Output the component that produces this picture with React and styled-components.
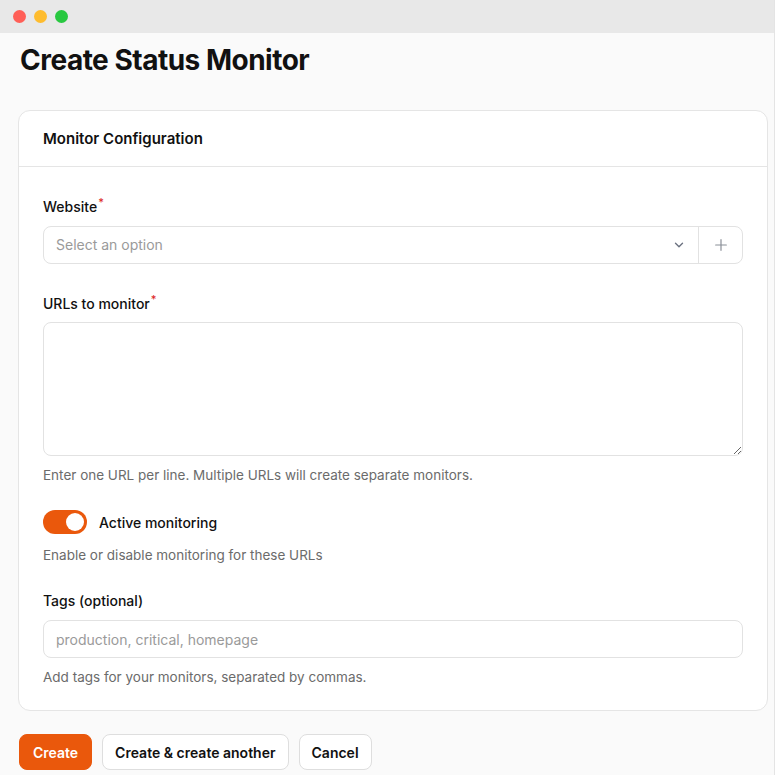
import React from "react";
import styled, { createGlobalStyle } from "styled-components";

const Global = createGlobalStyle`
  html, body { margin: 0; padding: 0; background: #fafafa; }
  body { font-family: Inter, "Noto Sans", sans-serif; color: #111; }
  * { box-sizing: border-box; }
`;

const Window = styled.div`
  width: 775px; height: 775px; display: flex; flex-direction: column;
  background: #fafafa; border-right: 1px solid #e4e4e4; overflow: hidden;
`;
const TitleBar = styled.div`
  height: 33px; background: #e8e8e8; display: flex; align-items: center; gap: 8px; padding-left: 13px; flex-shrink: 0;
`;
const Dot = styled.span`
  width: 13px; height: 13px; border-radius: 50%; background: ${p => p.c};
`;
const Content = styled.div`
  padding: 10px 6px 0 18px; display: flex; flex-direction: column;
`;
const Title = styled.h1`
  margin: 0 0 32px 2px; font-size: 28px; font-weight: 700; letter-spacing: -0.5px; line-height: 35px;
`;
const Card = styled.div`
  background: #fff; border: 1px solid #e5e5e5; border-radius: 12px;
`;
const CardHeader = styled.div`
  height: 56px; padding: 0 24px; display: flex; align-items: center; border-bottom: 1px solid #e5e5e5;
  font-size: 15px; font-weight: 600;
`;
const CardBody = styled.div`
  padding: 26px 24px 24px; display: flex; flex-direction: column;
`;
const Field = styled.div`
  display: flex; flex-direction: column; margin-bottom: ${p => p.mb || 0}px;
`;
const Label = styled.label`
  font-size: 14px; font-weight: 500; margin-bottom: 10px; line-height: 18px;
  sup { color: #dc2626; font-size: 11px; margin-left: 1px; }
`;
const SelectBox = styled.div`
  height: 38px; border: 1px solid #e2e2e2; border-radius: 8px; display: flex; align-items: stretch;
`;
const SelectMain = styled.div`
  flex: 1; display: flex; align-items: center; justify-content: space-between; padding: 0 12px;
  font-size: 14px; color: #9a9a9a;
`;
const AddBtn = styled.div`
  width: 44px; border-left: 1px solid #e2e2e2; display: flex; align-items: center; justify-content: center;
`;
const TextArea = styled.textarea`
  height: 134px; border: 1px solid #e2e2e2; border-radius: 8px; resize: vertical; font-family: inherit; outline: none;
`;
const Help = styled.div`
  font-size: 13.5px; color: #6b6b6b; margin-top: 10px; line-height: 18px;
`;
const ToggleRow = styled.div`
  display: flex; align-items: center; gap: 12px; font-size: 14px; font-weight: 500;
`;
const Toggle = styled.div`
  width: 44px; height: 24px; border-radius: 12px; background: #ea580c; position: relative;
  &::after { content: ""; position: absolute; right: 3px; top: 3px; width: 18px; height: 18px; border-radius: 50%; background: #fff; }
`;
const Input = styled.div`
  height: 38px; border: 1px solid #e2e2e2; border-radius: 8px; padding: 0 12px; display: flex; align-items: center;
  font-size: 14px; color: #9a9a9a;
`;
const Actions = styled.div`
  display: flex; gap: 10px; margin-top: 23px; margin-left: 1px;
`;
const Button = styled.button`
  height: 36px; padding: 0 ${p => p.primary ? 13 : 12}px; border-radius: 8px; font-family: inherit; font-size: 14px; font-weight: 600;
  background: ${p => p.primary ? "#ea580c" : "#fff"}; color: ${p => p.primary ? "#fff" : "#111"};
  border: 1px solid ${p => p.primary ? "#ea580c" : "#dedede"};
`;

export default function App() {
  return (
    <Window>
      <Global />
      <TitleBar>
        <Dot c="#ff5f57" /><Dot c="#febc2e" /><Dot c="#28c840" />
      </TitleBar>
      <Content>
        <Title>Create Status Monitor</Title>
        <Card>
          <CardHeader>Monitor Configuration</CardHeader>
          <CardBody>
            <Field mb={26}>
              <Label>Website<sup>*</sup></Label>
              <SelectBox>
                <SelectMain>
                  Select an option
                  <svg width="14" height="14" viewBox="0 0 24 24" fill="none" stroke="#6b7280" strokeWidth="2.4" strokeLinecap="round" strokeLinejoin="round"><path d="M6 9l6 6 6-6" /></svg>
                </SelectMain>
                <AddBtn>
                  <svg width="16" height="16" viewBox="0 0 24 24" fill="none" stroke="#8a8f98" strokeWidth="1.8" strokeLinecap="round"><path d="M12 4v16M4 12h16" /></svg>
                </AddBtn>
              </SelectBox>
            </Field>
            <Field mb={26}>
              <Label>URLs to monitor<sup>*</sup></Label>
              <TextArea />
              <Help>Enter one URL per line. Multiple URLs will create separate monitors.</Help>
            </Field>
            <Field mb={28}>
              <ToggleRow><Toggle />Active monitoring</ToggleRow>
              <Help style={{ marginTop: 12 }}>Enable or disable monitoring for these URLs</Help>
            </Field>
            <Field>
              <Label>Tags (optional)</Label>
              <Input>production, critical, homepage</Input>
              <Help>Add tags for your monitors, separated by commas.</Help>
            </Field>
          </CardBody>
        </Card>
        <Actions>
          <Button primary>Create</Button>
          <Button>Create &amp; create another</Button>
          <Button>Cancel</Button>
        </Actions>
      </Content>
    </Window>
  );
}
